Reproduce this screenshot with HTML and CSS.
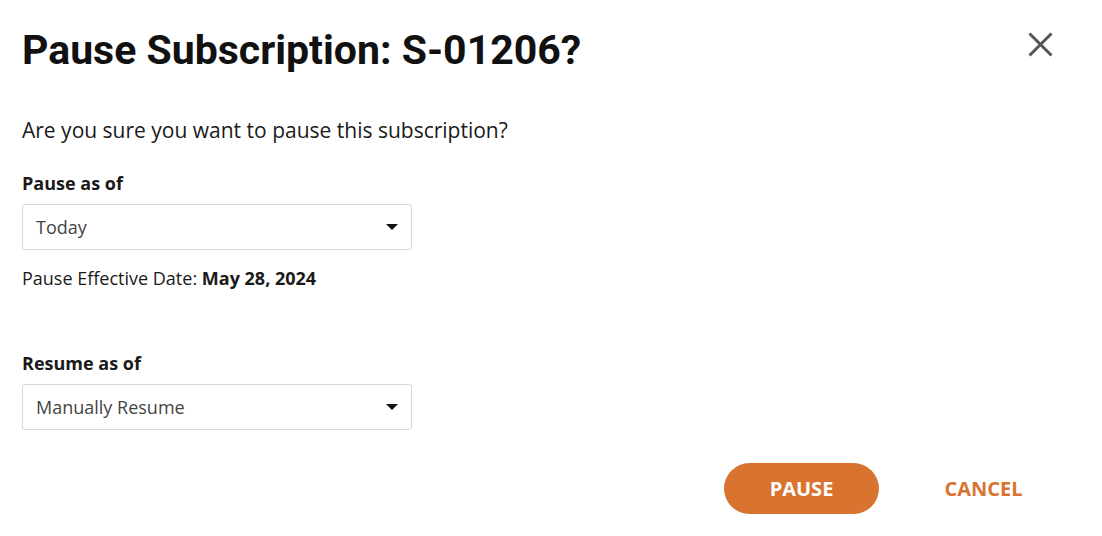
FILE: index.html
```html
<!DOCTYPE html>
<html>
<head>
<meta charset="utf-8">
<link rel="stylesheet" href="styles.css">
</head>
<body>
<div class="dialog">
  <div class="header">
    <h1 class="title">Pause Subscription: S-01206?</h1>
    <button class="close" aria-label="Close">
      <svg width="25" height="25" viewBox="0 0 25 25"><path d="M1.5 1.5 L23.5 23.5 M23.5 1.5 L1.5 23.5" stroke="#555" stroke-width="3" fill="none"/></svg>
    </button>
  </div>
  <p class="question">Are you sure you want to pause this subscription?</p>
  <div class="field">
    <label class="label">Pause as of</label>
    <div class="select"><span>Today</span><span class="caret"></span></div>
    <div class="note">Pause Effective Date: <b>May 28, 2024</b></div>
  </div>
  <div class="field field-resume">
    <label class="label">Resume as of</label>
    <div class="select"><span>Manually Resume</span><span class="caret"></span></div>
  </div>
  <div class="actions">
    <button class="btn btn-primary">PAUSE</button>
    <button class="btn btn-text">CANCEL</button>
  </div>
</div>
</body>
</html>
```
FILE: styles.css
```css
html, body {
  margin: 0;
  padding: 0;
  background: #fff;
}
body {
  font-family: "Open Sans", "Noto Sans", sans-serif;
  color: #1a1a1a;
}
.dialog {
  padding: 25px 41px 0 22px;
}
.header {
  display: flex;
  justify-content: space-between;
  align-items: flex-start;
}
.title {
  margin: 0;
  font-family: Roboto, "Liberation Sans", sans-serif;
  font-weight: 700;
  font-size: 41px;
  line-height: 50px;
  color: #111;
}
.close {
  margin: 7px 8px 0 0;
  padding: 0;
  border: 0;
  background: none;
  width: 25px;
  height: 25px;
  display: block;
}
.close svg { display: block; }
.question {
  margin: 43px 0 0;
  font-size: 21px;
  line-height: 24px;
}
.field {
  margin-top: 30px;
  width: 390px;
}
.field-resume {
  margin-top: 63px;
}
.label {
  display: block;
  font-size: 18px;
  font-weight: 700;
  line-height: 22px;
  margin-bottom: 10px;
}
.select {
  box-sizing: border-box;
  height: 46px;
  border: 1px solid #d9d9d9;
  border-radius: 3px;
  display: flex;
  align-items: center;
  justify-content: space-between;
  padding: 0 13px 0 13px;
  font-size: 18px;
  color: #444;
}
.caret {
  width: 0;
  height: 0;
  border-left: 6px solid transparent;
  border-right: 6px solid transparent;
  border-top: 6px solid #111;
}
.note {
  margin-top: 17px;
  font-size: 18px;
  line-height: 22px;
}
.note b { font-weight: 700; }
.actions {
  margin-top: 33px;
  display: flex;
  justify-content: flex-end;
  gap: 27px;
}
.btn {
  width: 155px;
  height: 51px;
  border-radius: 26px;
  border: 0;
  font-family: "Open Sans", "Noto Sans", sans-serif;
  font-weight: 700;
  font-size: 20px;
  cursor: pointer;
}
.btn-primary {
  background: #d87430;
  color: #fff;
}
.btn-text {
  background: transparent;
  color: #d87430;
}
```
